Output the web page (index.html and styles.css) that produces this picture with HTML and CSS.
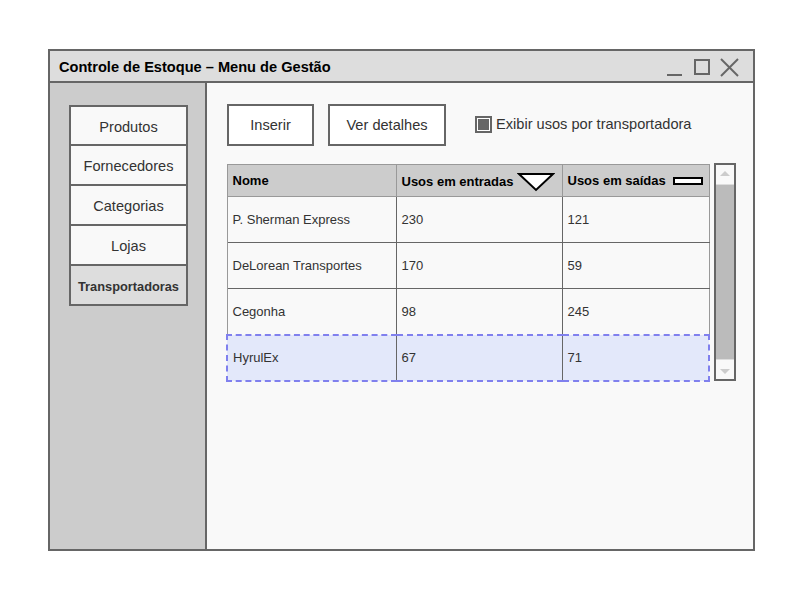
FILE: index.html
```html
<!DOCTYPE html>
<html lang="pt">
<head>
<meta charset="utf-8">
<link rel="stylesheet" href="styles.css">
</head>
<body>
<div class="window">
  <div class="titlebar">
    <span class="title">Controle de Estoque – Menu de Gestão</span>
    <div class="controls">
      <svg width="80" height="22" viewBox="0 0 80 22">
        <line x1="0" y1="19" x2="15" y2="19" stroke="#666" stroke-width="2"/>
        <rect x="28" y="4" width="14" height="14" fill="none" stroke="#666" stroke-width="2"/>
        <line x1="54" y1="3" x2="71" y2="20" stroke="#666" stroke-width="2"/>
        <line x1="71" y1="3" x2="54" y2="20" stroke="#666" stroke-width="2"/>
      </svg>
    </div>
  </div>
  <div class="body">
    <nav class="sidebar">
      <div class="menu">
        <div class="item">Produtos</div>
        <div class="item">Fornecedores</div>
        <div class="item">Categorias</div>
        <div class="item">Lojas</div>
        <div class="item active">Transportadoras</div>
      </div>
    </nav>
    <main class="content">
      <div class="toolbar">
        <button class="btn btn-ins">Inserir</button>
        <button class="btn btn-det">Ver detalhes</button>
        <label class="check"><span class="box"><span class="fill"></span></span>Exibir usos por transportadora</label>
      </div>
      <div class="grid-wrap">
        <table class="grid">
          <thead>
            <tr>
              <th class="c1">Nome</th>
              <th class="c2"><span>Usos em entradas</span>
                <svg class="tri" width="38" height="20" viewBox="0 0 38 20"><polygon points="2,2 36,2 19,18" fill="#fff" stroke="#000" stroke-width="2"/></svg>
              </th>
              <th class="c3"><span>Usos em saídas</span><span class="bar"></span></th>
            </tr>
          </thead>
          <tbody>
            <tr><td>P. Sherman Express</td><td>230</td><td>121</td></tr>
            <tr><td>DeLorean Transportes</td><td>170</td><td>59</td></tr>
            <tr><td>Cegonha</td><td>98</td><td>245</td></tr>
            <tr class="sel"><td>HyrulEx</td><td>67</td><td>71</td></tr>
          </tbody>
        </table>
        <div class="scroll">
          <div class="arrow up"></div>
          <div class="track"></div>
          <div class="arrow down"></div>
        </div>
      </div>
    </main>
  </div>
</div>
</body>
</html>
```
FILE: styles.css
```css
* { box-sizing: border-box; }
html, body { margin: 0; padding: 0; background: #fff; }
body {
  font-family: "Liberation Sans", Arial, sans-serif;
  color: #333;
  padding: 49px 0 0 48px;
}
.window {
  width: 707px;
  height: 502px;
  border: 2px solid #666;
  display: flex;
  flex-direction: column;
  background: #f9f9f9;
}
.titlebar {
  height: 32px;
  background: #ddd;
  border-bottom: 2px solid #666;
  display: flex;
  align-items: center;
  justify-content: space-between;
  padding: 0 0 0 9px;
  flex: none;
}
.title {
  font-weight: bold;
  font-size: 14.6px;
  color: #000;
  padding-top: 1px;
}
.controls { display: flex; padding-right: 6px; padding-top: 1px; }
.controls svg { display: block; }
.body { flex: 1; display: flex; min-height: 0; }
.sidebar {
  width: 157px;
  background: #ccc;
  border-right: 2px solid #666;
  padding: 22px 0 0 19px;
  flex: none;
}
.menu {
  width: 119px;
  border: 2px solid #666;
  display: flex;
  flex-direction: column;
}
.item {
  height: 40px;
  display: flex;
  align-items: center;
  justify-content: center;
  font-size: 14.6px;
  color: #333;
  background: #f9f9f9;
  border-bottom: 2px solid #666;
  padding-top: 2px;
}
.item:first-child { height: 39px; }
.item.active {
  background: #ddd;
  font-weight: bold;
  font-size: 12.8px;
  border-bottom: none;
  height: 38px;
}
.content { flex: 1; padding: 21px 0 0 20px; }
.toolbar { display: flex; align-items: center; height: 42px; }
.btn {
  font-family: inherit;
  font-size: 14.6px;
  color: #333;
  background: #fff;
  border: 2px solid #666;
  height: 42px;
  padding: 0;
}
.btn-ins { width: 87px; }
.btn-det { width: 118px; margin-left: 14px; }
.check {
  display: flex;
  align-items: center;
  font-size: 14.6px;
  color: #333;
  margin-left: 29px;
  margin-top: -2px;
}
.box {
  width: 17px;
  height: 17px;
  border: 2px solid #666;
  background: #fff;
  padding: 1px;
  margin-right: 4px;
  display: block;
}
.fill { display: block; width: 100%; height: 100%; background: #666; }
.grid-wrap { display: flex; margin-top: 18px; }
.grid {
  border-collapse: collapse;
  width: 484px;
  font-size: 13px;
  color: #333;
  table-layout: fixed;
  border: 1px solid #999;
  margin-left: -1px;
}
.grid th {
  background: #ccc;
  color: #000;
  font-weight: bold;
  text-align: left;
  height: 32px;
  padding: 0 0 0 5px;
  border: 1px solid #999;
  border-left: 1px solid #666;
  white-space: nowrap;
}
.grid th:first-child { border-left: 1px solid #999; }
.grid th.c1 { width: 169px; }
.grid th.c2 { width: 166px; }
.grid th > span, .grid th > svg { vertical-align: middle; }
.tri { margin-left: 0; margin-top: 2px; }
.bar {
  display: inline-block;
  width: 30px;
  height: 8px;
  border: 2px solid #000;
  background: #fff;
  margin-left: 7px;
}
.grid td {
  height: 46px;
  padding: 0 0 0 5px;
  border-top: 1px solid #666;
  border-left: 1px solid #666;
  background: #f9f9f9;
}
.grid td:first-child { border-left: 1px solid #999; }
.grid tr.sel td {
  background: #e3e8fa;
  border-top: 2px dashed #8080ee;
  border-bottom: 2px dashed #8080ee;
}
.grid tr.sel td:first-child { border-left: 2px dashed #8080ee; }
.grid tr.sel td:last-child { border-right: 2px dashed #8080ee; }
.scroll {
  width: 22px;
  height: 218px;
  margin-left: 4px;
  margin-top: -1px;
  border: 2px solid #666;
  background: #bbb;
  display: flex;
  flex-direction: column;
}
.arrow {
  height: 20px;
  background: #f9f9f9;
  position: relative;
  flex: none;
}
.arrow.up { border-bottom: 1px solid #ddd; }
.arrow.down { border-top: 1px solid #ddd; }
.track { flex: 1; }
.arrow::after {
  content: "";
  position: absolute;
  left: 4px;
  width: 0; height: 0;
  border-left: 5px solid transparent;
  border-right: 5px solid transparent;
}
.arrow.up::after { top: 6px; border-bottom: 5px solid #ccc; }
.arrow.down::after { top: 9px; border-top: 5px solid #ccc; }
```
